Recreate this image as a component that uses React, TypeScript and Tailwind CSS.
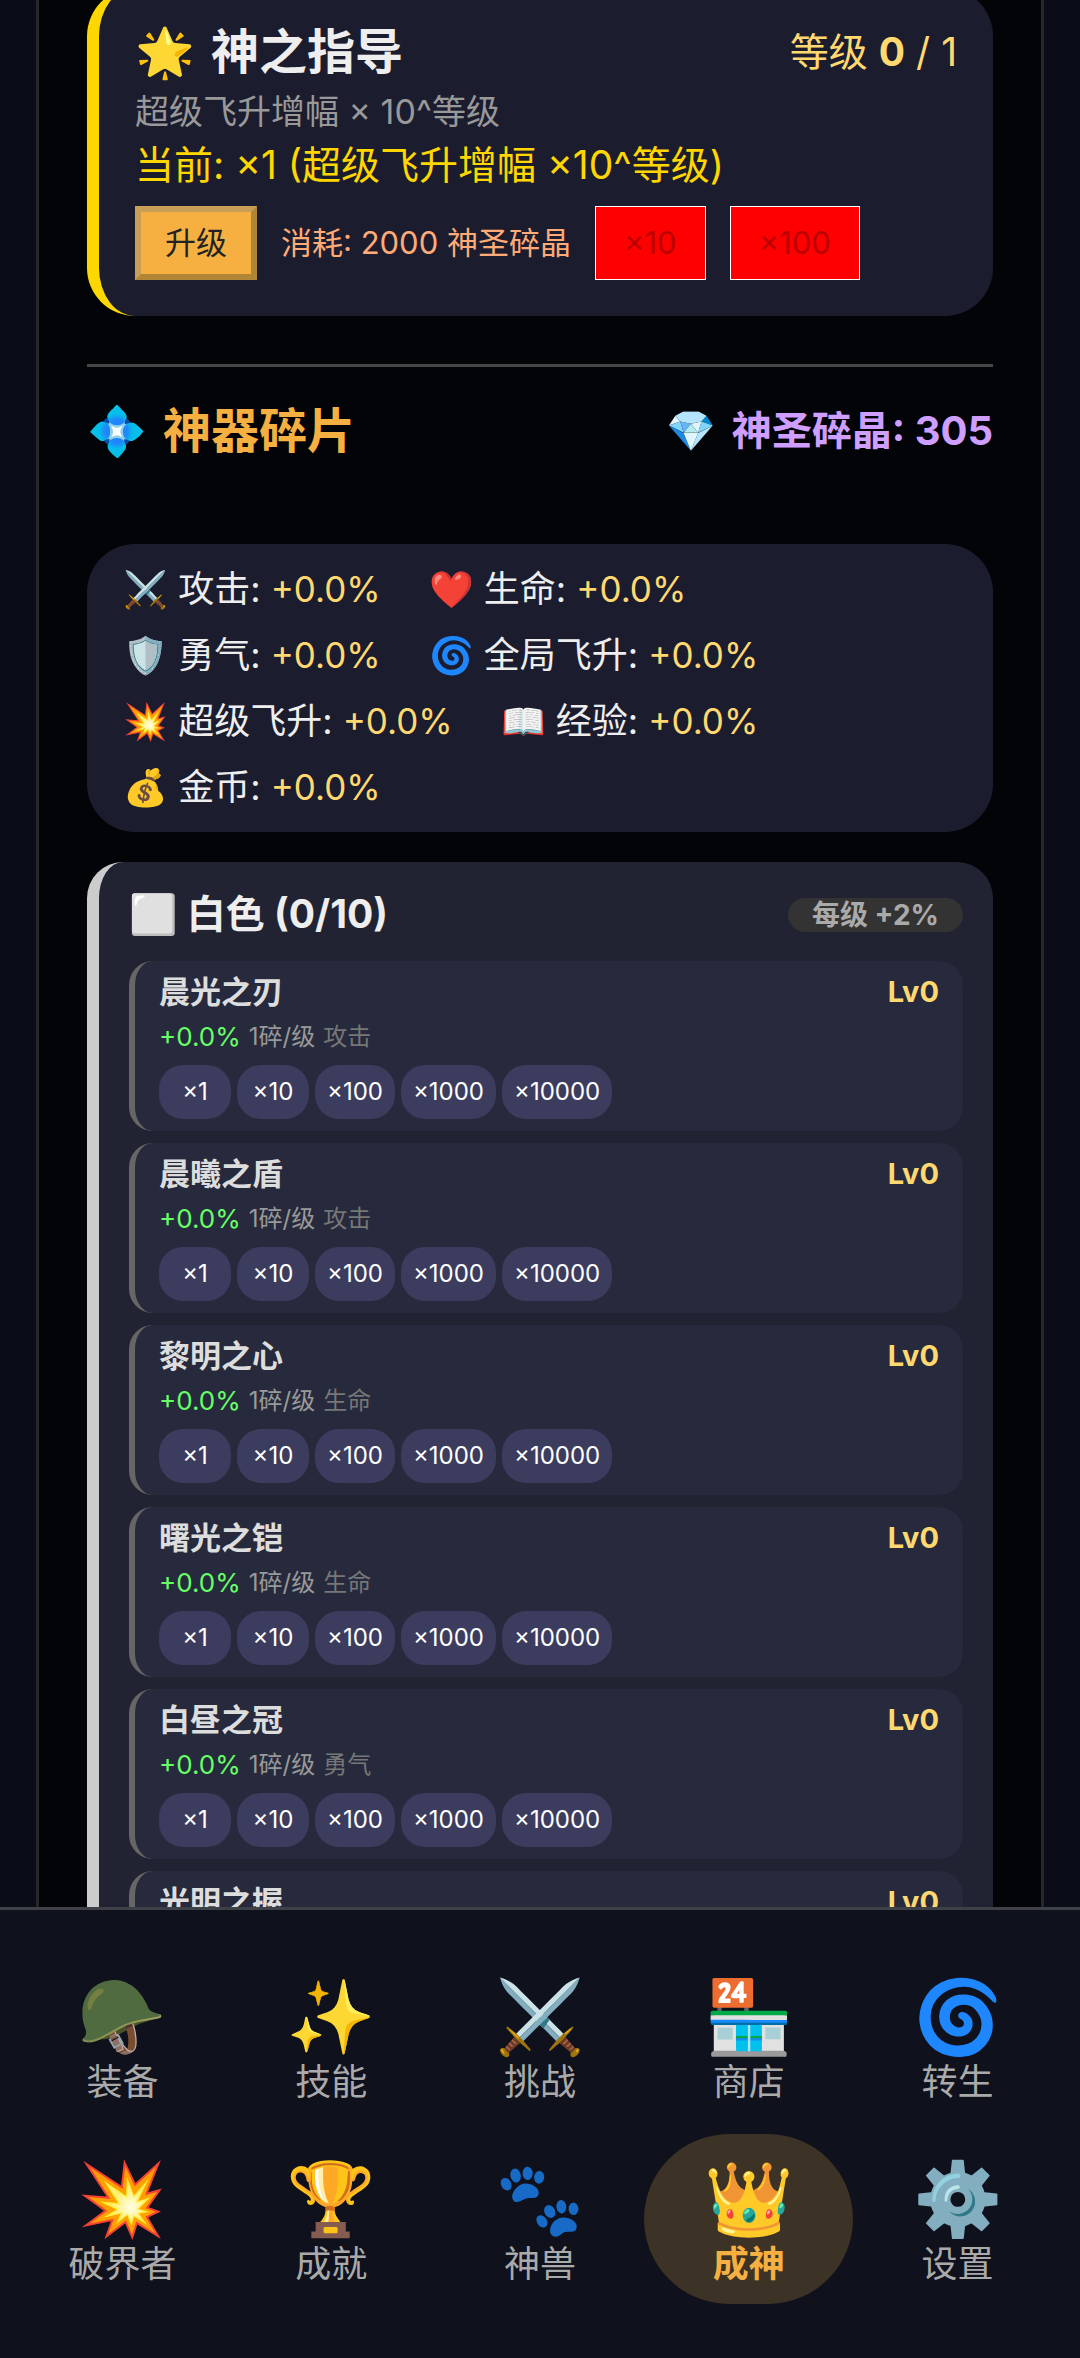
interface Stat {
  icon: string;
  label: string;
  value: string;
}

interface Artifact {
  name: string;
  kind: string;
}

interface Tab {
  icon: string;
  label: string;
}

const stats: Stat[] = [
  { icon: '⚔️', label: '攻击', value: '+0.0%' },
  { icon: '❤️', label: '生命', value: '+0.0%' },
  { icon: '🛡️', label: '勇气', value: '+0.0%' },
  { icon: '🌀', label: '全局飞升', value: '+0.0%' },
  { icon: '💥', label: '超级飞升', value: '+0.0%' },
  { icon: '📖', label: '经验', value: '+0.0%' },
  { icon: '💰', label: '金币', value: '+0.0%' },
];

const artifacts: Artifact[] = [
  { name: '晨光之刃', kind: '攻击' },
  { name: '晨曦之盾', kind: '攻击' },
  { name: '黎明之心', kind: '生命' },
  { name: '曙光之铠', kind: '生命' },
  { name: '白昼之冠', kind: '勇气' },
  { name: '光明之握', kind: '勇气' },
];

const amounts = [1, 10, 100, 1000, 10000];

const tabs: Tab[] = [
  { icon: '🪖', label: '装备' },
  { icon: '✨', label: '技能' },
  { icon: '⚔️', label: '挑战' },
  { icon: '🏪', label: '商店' },
  { icon: '🌀', label: '转生' },
  { icon: '💥', label: '破界者' },
  { icon: '🏆', label: '成就' },
  { icon: '🐾', label: '神兽' },
  { icon: '👑', label: '成神' },
  { icon: '⚙️', label: '设置' },
];

const activeTab = '成神';

const GuidanceCard = () => (
  <section className="-mt-3 bg-[#1b1d2f] border-l-12 border-[#ffd700] rounded-[48px] p-9">
    <div className="flex items-center justify-between h-14">
      <h2 className="flex gap-4 text-5xl font-bold text-[#eeeeee]"><span>🌟</span>神之指导</h2>
      <span className="text-[39px] text-[#ffd970]">等级 <b>0</b> / 1</span>
    </div>
    <p className="mt-2 text-[34px] leading-12 text-[#999999]">超级飞升增幅 × 10^等级</p>
    <p className="text-[39px] leading-[58px] text-[#ffd700]">当前: ×1 (超级飞升增幅 ×10^等级)</p>
    <div className="mt-3 flex items-stretch gap-6 text-[31px] leading-[62px]">
      <button className="px-6 bg-[#f5b041] text-[#222222] border-6 border-t-[#c99f57] border-l-[#c99f57] border-r-[#b08636] border-b-[#b08636]">升级</button>
      <span className="self-center text-[#ffaa77]">消耗: 2000 神圣碎晶</span>
      <button disabled className="px-7 bg-[#ff0000] text-[#bb0000] border border-white">×10</button>
      <button disabled className="px-7 bg-[#ff0000] text-[#bb0000] border border-white">×100</button>
    </div>
  </section>
);

const StatPanel = () => (
  <ul className="bg-[#1b1d2f] rounded-[48px] px-9 py-[18px] flex flex-wrap gap-x-12 gap-y-3">
    {stats.map((s) => (
      <li key={s.label} className="text-[36px] leading-[54px] text-[#eeeeee]">
        {s.icon} {s.label}: <span className="text-[35px] text-[#ffd970]">{s.value}</span>
      </li>
    ))}
  </ul>
);

const ArtifactRow = ({ name, kind }: Artifact) => (
  <li className="bg-[#262a3c] border-l-6 border-[#666666] rounded-3xl px-6 py-3">
    <div className="flex justify-between leading-[38px] font-bold">
      <h4 className="text-[31px] text-[#dddddd]">{name}</h4>
      <span className="text-[29px] text-[#ffd970]">Lv0</span>
    </div>
    <p className="mt-2 flex items-center gap-2 leading-9">
      <span className="text-[26px] text-[#66ff66]">+0.0%</span>
      <span className="text-2xl leading-9 text-[#999999]">1碎/级</span>
      <span className="text-2xl leading-9 text-[#777777]">{kind}</span>
    </p>
    <div className="mt-2.5 flex gap-1.5">
      {amounts.map((n) => (
        <button key={n} className="min-w-18 px-3 h-[54px] rounded-3xl bg-[#3c3d5e] text-white text-2xl">×{n}</button>
      ))}
    </div>
  </li>
);

const WhiteTier = () => (
  <section className="mt-[30px] bg-[#212333] border-l-12 border-[#cccccc] rounded-[36px] p-[30px]">
    <div className="flex items-center justify-between h-[45px]">
      <h3 className="text-[39px] font-bold text-[#eeeeee]">
        <span className='font-["Noto_Color_Emoji"]'>⬜</span> 白色 (0/10)
      </h3>
      <span className="px-6 rounded-full bg-[#333333] text-[#aaaaaa] text-[28px] leading-[34px] font-bold">每级 +2%</span>
    </div>
    <ul className="mt-6 flex flex-col gap-3">
      {artifacts.map((a) => <ArtifactRow key={a.name} {...a} />)}
    </ul>
  </section>
);

const BottomNav = () => (
  <nav className="shrink-0 grid grid-cols-5 gap-y-3 border-t-3 border-[#3e4148] bg-[#0f111d] px-[18px] pt-[42px] pb-[54px]">
    {tabs.map((t) => (
      <button
        key={t.label}
        className={`flex flex-col items-center gap-1 pt-6 pb-[18px] rounded-[90px] ${
          t.label === activeTab ? 'bg-[#3c3226] text-[#f5b041] font-bold' : 'text-[#aaaaaa]'
        }`}
      >
        <span className="text-7xl leading-20">{t.icon}</span>
        <span className="text-[36px] leading-11">{t.label}</span>
      </button>
    ))}
  </nav>
);

const App = () => (
  <div className='h-screen flex flex-col bg-[#0a0c17] font-[Inter,"Noto_Sans_CJK_SC",sans-serif]'>
    <main className="flex-1 min-h-0 overflow-x-hidden overflow-y-auto [scrollbar-width:none] mx-9 px-12 border-x-3 border-[#25272b] bg-[#030407]">
      <GuidanceCard />
      <hr className="mt-12 border-t-3 border-[#444648]" />
      <header className="flex items-center justify-between h-16 mt-8 mb-[81px] font-bold">
        <h2 className="flex gap-4 text-5xl text-[#f5b041]"><span>💠</span>神器碎片</h2>
        <span className="flex gap-4 text-[40px] text-[#cf9fff]"><span>💎</span>神圣碎晶: 305</span>
      </header>
      <StatPanel />
      <WhiteTier />
    </main>
    <BottomNav />
  </div>
);

export default App;
